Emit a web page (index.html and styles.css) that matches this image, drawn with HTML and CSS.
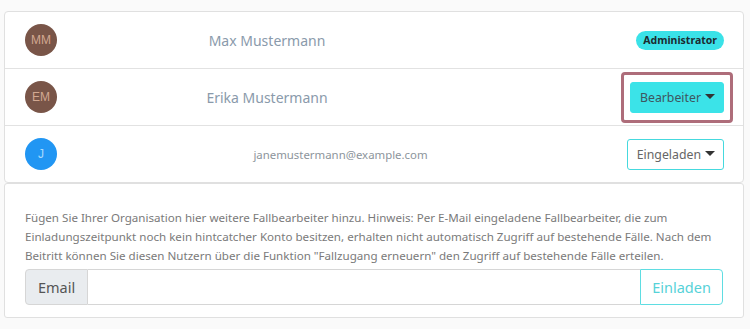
FILE: index.html
```html
<!DOCTYPE html>
<html lang="de">
<head>
    <meta charset="UTF-8">
    <meta name="viewport" content="width=device-width, initial-scale=1.0">
    <title>Organisation</title>
    <link rel="stylesheet" href="styles.css">
</head>
<body>

    <ul class="member-list">
        <li class="member">
            <span class="avatar avatar-brown">MM</span>
            <span class="member-name">Max Mustermann</span>
            <span class="member-role"><span class="badge">Administrator</span></span>
        </li>
        <li class="member">
            <span class="avatar avatar-brown">EM</span>
            <span class="member-name">Erika Mustermann</span>
            <span class="member-role">
                <span class="focus-ring"><button class="btn btn-info dropdown-toggle">Bearbeiter</button></span>
            </span>
        </li>
        <li class="member">
            <span class="avatar avatar-blue">J</span>
            <span class="member-email">janemustermann@example.com</span>
            <span class="member-role"><button class="btn btn-outline dropdown-toggle">Eingeladen</button></span>
        </li>
    </ul>

    <div class="invite-card">
        <p class="hint">Fügen Sie Ihrer Organisation hier weitere Fallbearbeiter hinzu. Hinweis: Per E-Mail eingeladene Fallbearbeiter, die zum Einladungszeitpunkt noch kein hintcatcher Konto besitzen, erhalten nicht automatisch Zugriff auf bestehende Fälle. Nach dem Beitritt können Sie diesen Nutzern über die Funktion "Fallzugang erneuern" den Zugriff auf bestehende Fälle erteilen.</p>
        <div class="input-group">
            <span class="input-label">Email</span>
            <input class="input-field" type="email">
            <button class="btn-invite">Einladen</button>
        </div>
    </div>

</body>
</html>
```

FILE: styles.css
```css
body {
    font-family: 'Noto Sans', sans-serif;
    margin: 0;
    padding: 11px 6px 0 4px;
    background-color: #fafafa;
}

.member-list {
    list-style: none;
    margin: 0;
    padding: 0;
    background: #fff;
    border: 1px solid #e0e0e0;
    border-radius: 4px;
}

.member {
    display: grid;
    grid-template-columns: 32px 420px 1fr 100px;
    align-items: center;
    height: 32px;
    padding: 12px 19px 12px 20px;
    border-top: 1px solid #e2e2e2;
}

.member:first-child {
    border-top: none;
}

.avatar {
    width: 32px;
    height: 32px;
    border-radius: 50%;
    display: flex;
    align-items: center;
    justify-content: center;
    font-family: 'Liberation Sans', sans-serif;
    font-size: 12px;
}

.avatar-brown {
    background: #795548;
    color: #d2a891;
}

.avatar-blue {
    background: #2196f3;
    color: #a9dafc;
}

.member-name {
    grid-column: 2;
    text-align: center;
    font-size: 14px;
    color: #8a9aab;
}

.member-email {
    grid-column: 2 / 4;
    text-align: center;
    font-size: 11.4px;
    color: #8d959c;
}

.member-role {
    grid-column: 4;
    display: flex;
    justify-content: flex-end;
}

.badge {
    background: #3ae2e8;
    color: #1c2b30;
    font-size: 10.5px;
    font-weight: bold;
    padding: 2px 7px 3px;
    border-radius: 10px;
}

.focus-ring {
    border: 3px solid #ae6d7a;
    border-radius: 4px;
    padding: 7px 6px;
    margin: -10px -9px;
}

.btn {
    font-family: inherit;
    font-size: 12.3px;
    height: 31px;
    padding: 0 8px 0 9px;
    border-radius: 3px;
    white-space: nowrap;
    cursor: pointer;
}

.btn-info {
    background: #3be3e8;
    border: 1px solid #3be3e8;
    color: #3e5660;
}

.btn-outline {
    background: #fff;
    border: 1px solid #45d9de;
    color: #666;
}

.dropdown-toggle::after {
    content: "";
    display: inline-block;
    margin-left: 4px;
    vertical-align: 3px;
    border-top: 5px solid #333;
    border-left: 5px solid transparent;
    border-right: 5px solid transparent;
}

.invite-card {
    background: #fff;
    border: 1px solid #e0e0e0;
    border-radius: 3px;
    padding: 24px 20px 12px 20px;
}

.hint {
    margin: 0 0 4px;
    font-size: 11.6px;
    line-height: 19px;
    color: #7a7a7a;
}

.input-group {
    display: flex;
    height: 36px;
}

.input-label {
    display: flex;
    align-items: center;
    padding: 0 12px;
    background: #e9ecef;
    border: 1px solid #d6d6d6;
    border-radius: 4px 0 0 4px;
    font-size: 14.5px;
    color: #555;
}

.input-field {
    flex: 1;
    border: 1px solid #d6d6d6;
    border-left: none;
    border-right: none;
    padding: 0 12px;
    min-width: 0;
}

.btn-invite {
    font-family: inherit;
    font-size: 14.5px;
    width: 83px;
    background: #fff;
    border: 1px solid #5fdde2;
    border-radius: 0 4px 4px 0;
    color: #56d2d8;
}
```
